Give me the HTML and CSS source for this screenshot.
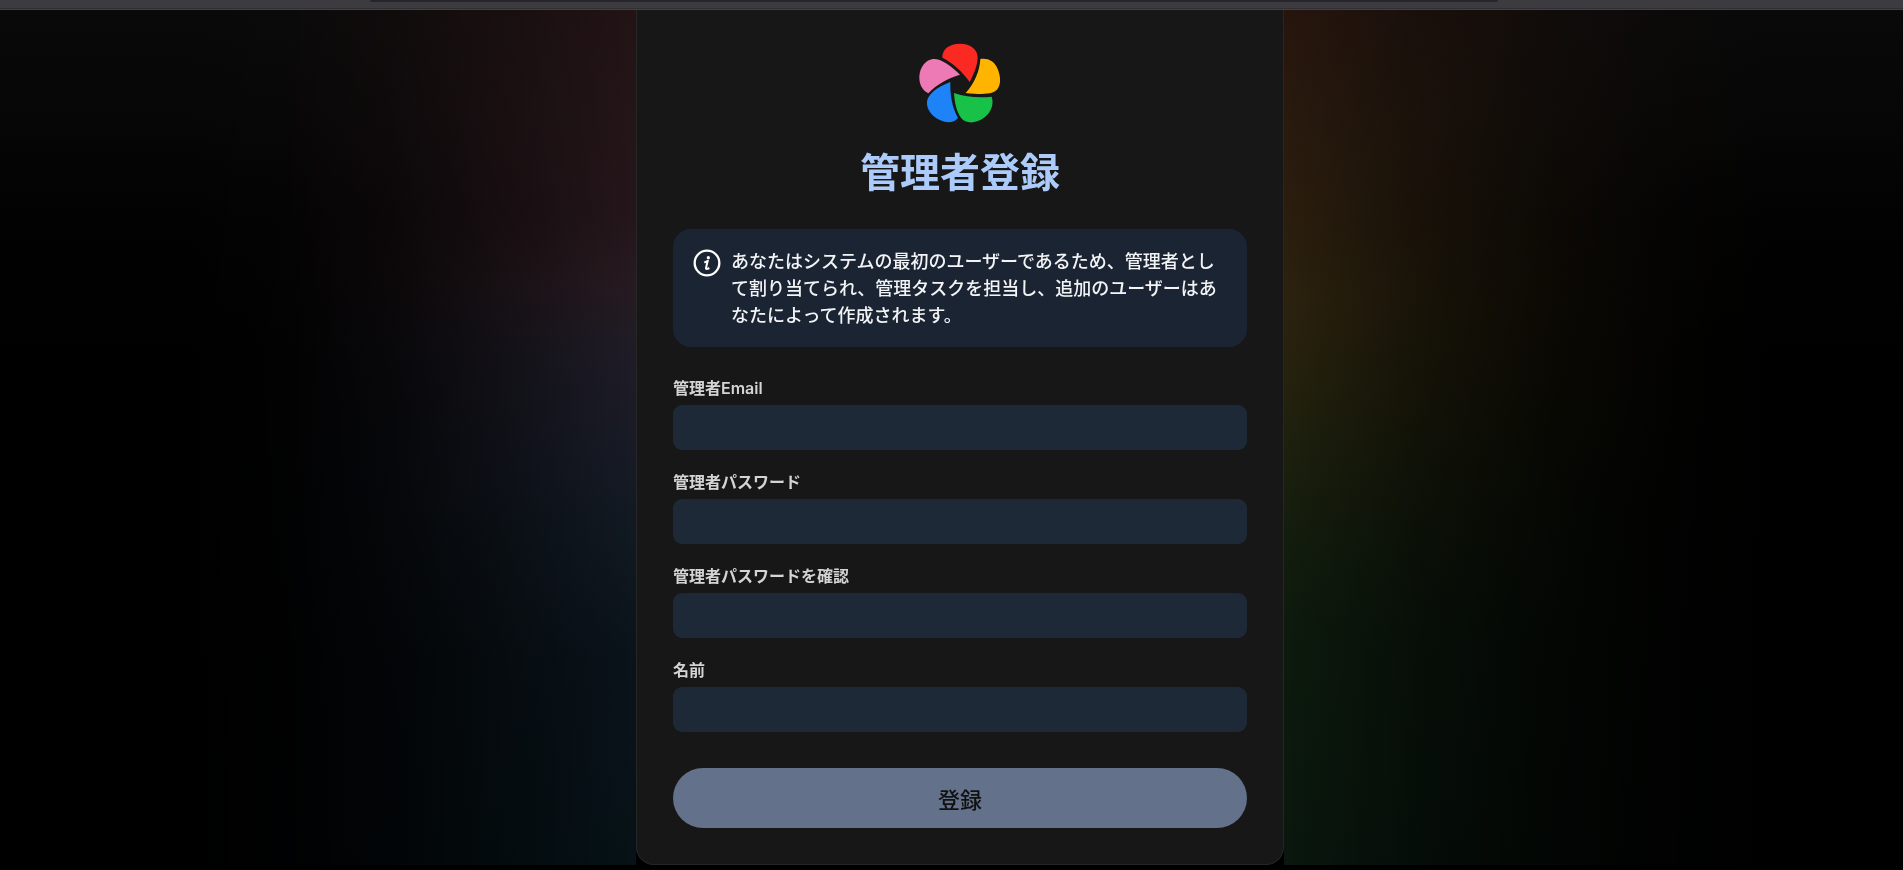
FILE: index.html
```html
<!DOCTYPE html>
<html lang="ja">
<head>
<meta charset="utf-8">
<meta name="viewport" content="width=device-width, initial-scale=1">
<title>管理者登録</title>
<link rel="stylesheet" href="styles.css">
</head>
<body>
<div class="toolbar"><div class="toolbar-field"></div></div>
<main class="page">
  <div class="glow glow-left"></div>
  <section class="card">
    <svg class="logo" viewBox="54 36 252 246" aria-hidden="true">
      <path fill="#fa2921" d="M127 83C126 57 148 41 180 41C212 41 233 58 233 83C232 108 221 133 209 156C185 122 158 99 127 83Z"/>
      <path fill="#ffb400" d="M241 87C266 84 283 94 292 115C303 140 303 164 292 178C281 192 256 195 197 189C224 159 239 124 241 87Z"/>
      <path fill="#18c249" d="M162 189C198 201 235 204 275 200C282 221 275 244 254 262C235 277 212 281 196 274C178 265 165 237 162 189Z"/>
      <path fill="#1e83f7" d="M151 156C150 195 156 231 174 264C163 278 143 281 121 271C95 259 79 237 81 215C83 193 113 170 151 156Z"/>
      <path fill="#ed79b5" d="M180 134C142 145 109 164 85 190C66 181 57 162 58 139C60 111 77 90 98 87C119 84 149 103 180 134Z"/>
    </svg>
    <h1 class="title">管理者登録</h1>
    <div class="notice">
      <svg class="notice-icon" viewBox="92 80 96 96" aria-hidden="true">
        <circle cx="140" cy="128" r="37" fill="none" stroke="currentColor" stroke-width="7"/>
        <circle cx="144" cy="112" r="5" fill="currentColor"/>
        <path d="M132 127Q138 123 142 122L137 143Q136 149 147 143" fill="none" stroke="currentColor" stroke-width="6"/>
      </svg>
      <p class="notice-text">あなたはシステムの最初のユーザーであるため、管理者として割り当てられ、管理タスクを担当し、追加のユーザーはあなたによって作成されます。</p>
    </div>
    <form class="form">
      <div class="field">
        <label class="label" for="email">管理者Email</label>
        <input class="input" id="email" type="email" autocomplete="email">
      </div>
      <div class="field">
        <label class="label" for="password">管理者パスワード</label>
        <input class="input" id="password" type="password" autocomplete="new-password">
      </div>
      <div class="field">
        <label class="label" for="confirm">管理者パスワードを確認</label>
        <input class="input" id="confirm" type="password" autocomplete="new-password">
      </div>
      <div class="field">
        <label class="label" for="name">名前</label>
        <input class="input" id="name" type="text" autocomplete="name">
      </div>
      <button class="submit" type="submit">登録</button>
    </form>
  </section>
  <div class="glow glow-right"></div>
</main>
</body>
</html>
```
FILE: styles.css
```css
* {
  box-sizing: border-box;
}

body {
  margin: 0;
  background: #000;
  color: #f3f4f6;
  font-family: Inter, "Noto Sans CJK JP", sans-serif;
  font-size: 16px;
  overflow-x: hidden;
}

.toolbar {
  height: 10px;
  padding: 0 405px 0 370px;
  background: #3c3b40;
  border-bottom: 1px solid #424146;
  box-shadow: inset 0 -1px #302f34;
}

.toolbar-field {
  height: 2px;
  background: #26252b;
  border-radius: 0 0 4px 4px;
}

.page {
  display: grid;
  grid-template-columns: minmax(0, 1fr) minmax(0, 648px) minmax(0, 1fr);
  padding-left: 17px;
  background: linear-gradient(#090909, #060606 110px, #020202 210px, #000 350px);
}

.glow {
  mix-blend-mode: screen;
}

.glow-left {
  background:
    linear-gradient(to left, rgba(0, 0, 0, 0), rgba(0, 0, 0, .42) 22%, rgba(0, 0, 0, .75) 40%, rgba(0, 0, 0, .93) 56%, #000 72%),
    linear-gradient(#1b0a0c, #221318 200px, #26191f 270px, #201c26 330px, #181b27 440px, #111922 520px, #0a131a 650px, #061217);
}

.glow-right {
  background:
    linear-gradient(to right, rgba(0, 0, 0, 0), rgba(0, 0, 0, .45) 22%, rgba(0, 0, 0, .76) 44%, rgba(0, 0, 0, .94) 64%, #000 78%),
    linear-gradient(#1f0c04, #281b0b 200px, #2b210d 290px, #25220d 370px, #1d200d 440px, #131d0d 530px, #0d1a0d 620px, #09170e);
}

.card {
  padding: 32px 36px 36px;
  background: #171717;
  border: 1px solid #262626;
  border-top: 0;
  border-radius: 0 0 18px 18px;
}

.logo {
  display: block;
  width: 84px;
  margin: 0 auto;
}

.title {
  margin: 25px 0 32px;
  color: #accbfa;
  font-size: 40px;
  font-weight: 700;
  line-height: 48px;
  text-align: center;
}

.notice {
  display: flex;
  gap: 8px;
  padding: 18px;
  background: #1b2433;
  border-radius: 18px;
}

.notice-icon {
  flex: none;
  width: 32px;
  height: 32px;
  color: #fff;
}

.notice-text {
  margin: 0;
  padding-top: 1px;
  font-size: 18px;
  font-weight: 500;
  line-height: 27px;
}

.form {
  display: grid;
  gap: 20px;
  margin-top: 29px;
}

.field {
  display: grid;
  gap: 5px;
}

.label {
  color: #d4d4d4;
  font-weight: 600;
  line-height: 24px;
}

.input {
  width: 100%;
  height: 45px;
  padding: 0 12px;
  background: #1e2938;
  border: 0;
  border-radius: 9px;
  color: #f3f4f6;
  font: inherit;
}

.submit {
  height: 60px;
  margin-top: 16px;
  background: #64718b;
  border: 0;
  border-radius: 30px;
  color: #111;
  font: inherit;
  font-size: 22px;
  font-weight: 500;
}
```
